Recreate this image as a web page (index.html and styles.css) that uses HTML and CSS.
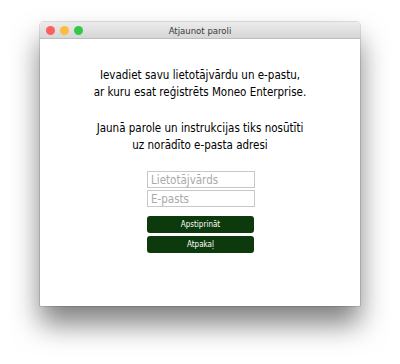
FILE: index.html
```html
<!DOCTYPE html>
<html>
<head>
<meta charset="utf-8">
<link rel="stylesheet" href="styles.css">
</head>
<body>
<div class="window">
  <div class="titlebar">
    <div class="lights">
      <span class="light red"></span>
      <span class="light yellow"></span>
      <span class="light green"></span>
    </div>
    <div class="title">Atjaunot paroli</div>
  </div>
  <div class="content">
    <p class="msg">Ievadiet savu lietotājvārdu un e-pastu,<br>ar kuru esat reģistrēts Moneo Enterprise.</p>
    <p class="msg second">Jaunā parole un instrukcijas tiks nosūtīti<br>uz norādīto e-pasta adresi</p>
    <div class="form">
      <input class="field" type="text" placeholder="Lietotājvārds">
      <input class="field" type="text" placeholder="E-pasts">
      <button class="btn first">Apstiprināt</button>
      <button class="btn">Atpakaļ</button>
    </div>
  </div>
</div>
</body>
</html>
```
FILE: styles.css
```css
html {
  margin: 0;
  padding: 0;
  height: 100%;
  background: #ffffff;
}
body {
  margin: 0;
  box-sizing: border-box;
  min-height: 100%;
  padding: 22px 40px 0 40px;
  font-family: "DejaVu Sans Condensed", "DejaVu Sans", sans-serif;
}
.window {
  width: 320px;
  height: 284px;
  display: flex;
  flex-direction: column;
  border-radius: 4px 4px 1px 1px;
  box-shadow: 0 18px 28px rgba(0,0,0,0.5), 0 0 0 1px rgba(0,0,0,0.12);
  background: #fff;
  overflow: hidden;
}
.titlebar {
  height: 16px;
  flex: none;
  display: flex;
  align-items: center;
  position: relative;
  background: linear-gradient(#ececec, #d6d6d6);
  border-bottom: 1px solid #bdbdbd;
}
.lights {
  display: flex;
  gap: 5px;
  padding-left: 6px;
}
.light {
  width: 9px;
  height: 9px;
  border-radius: 50%;
  display: block;
}
.red { background: #fc605c; }
.yellow { background: #fdbc40; }
.green { background: #34c84a; }
.title {
  position: absolute;
  left: 0;
  right: 0;
  top: 1px;
  text-align: center;
  font-size: 9.5px;
  color: #3a3a3a;
  line-height: 16px;
}
.content {
  flex: 1;
  display: flex;
  flex-direction: column;
  align-items: center;
  padding-top: 28px;
}
.msg {
  margin: 0;
  text-align: center;
  font-size: 11.5px;
  line-height: 17px;
  color: #000;
}
.second {
  margin-top: 19px;
}
.form {
  margin-top: 17px;
  display: flex;
  flex-direction: column;
  width: 108px;
  margin-left: 2px;
}
.field {
  box-sizing: border-box;
  width: 108px;
  height: 17px;
  margin: 0 0 2px 0;
  padding: 0 3px;
  border: 1px solid #c8c8c8;
  font-family: "DejaVu Sans Condensed", "DejaVu Sans", sans-serif;
  font-size: 11.5px;
  color: #333;
  outline: none;
}
.field::placeholder {
  color: #a9a9a9;
}
.btn {
  box-sizing: border-box;
  width: 107px;
  height: 17px;
  border: none;
  border-radius: 3px;
  background: #0c3a0c;
  color: #fff;
  font-family: "DejaVu Sans Condensed", "DejaVu Sans", sans-serif;
  font-size: 8px;
  padding: 0;
  margin-top: 3px;
}
.btn.first {
  margin-top: 7px;
}
```
